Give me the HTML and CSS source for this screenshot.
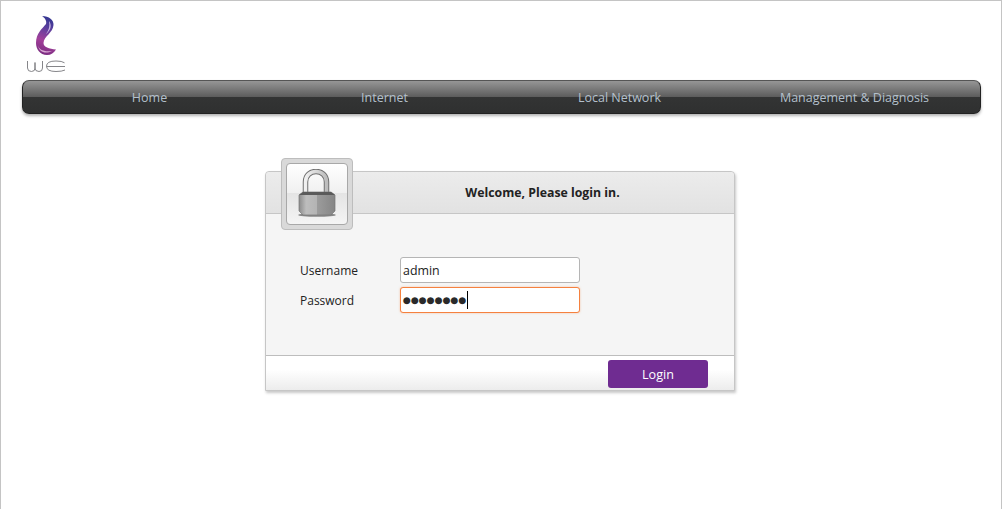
FILE: index.html
```html
<!DOCTYPE html>
<html lang="en">
<head>
<meta charset="utf-8">
<title>Login</title>
<link rel="stylesheet" href="styles.css">
</head>
<body>
<div class="page">
  <header class="logo-row">
    <svg class="logo" width="44" height="60" viewBox="0 0 44 60" aria-label="we logo">
      <defs>
        <linearGradient id="sw" x1="0.6" y1="0" x2="0.4" y2="1">
          <stop offset="0" stop-color="#2f3590"/>
          <stop offset="0.3" stop-color="#5b3f9e"/>
          <stop offset="0.65" stop-color="#a2409a"/>
          <stop offset="1" stop-color="#7a2c80"/>
        </linearGradient>
      </defs>
      <path d="M18 1 C25 1 30 5 29.500 10 C29 18 20 21 19.500 28 C19.500 32 25 34 32 34.500 C30 38 27 40 23 40 C16 40 12 34 12 28 C12 18 18 14 22 9 C23 6 21 3 18 1 Z" fill="url(#sw)"/>
      <path d="M25 6 C28 10 27 15 22 19 C25 15 26 11 25 6 Z" fill="#c9b8e2"/>
      <path d="M14 30 C15 35 20 37 28 36 C22 39 15 38 14 30 Z" fill="#d9a8d4"/>
      <path d="M3.500 46 V53 Q3.500 56.500 7.500 56.500 Q11 56.500 11 53 V47.500 V53 Q11 56.500 15 56.500 Q18.500 56.500 18.500 53 V46" fill="none" stroke="#77777c" stroke-width="0.9"/>
      <path d="M40.500 47.800 Q38 46 32 46 Q22.500 46 22.500 51.200 Q22.500 56.500 32 56.500 Q38 56.500 41 55 M22.500 51.500 H41" fill="none" stroke="#77777c" stroke-width="0.9"/>
    </svg>
  </header>
  <nav class="nav">
    <a class="nav-item">Home</a>
    <a class="nav-item">Internet</a>
    <a class="nav-item">Local Network</a>
    <a class="nav-item">Management &amp; Diagnosis</a>
  </nav>
  <main class="card">
    <div class="lock-box">
      <div class="lock-inner">
        <svg width="44" height="50" viewBox="0 0 44 50">
          <defs>
            <linearGradient id="body" x1="0" x2="1" y1="0" y2="0">
              <stop offset="0" stop-color="#8b8b8b"/>
              <stop offset="0.2" stop-color="#bdbdbd"/>
              <stop offset="0.49" stop-color="#b4b4b4"/>
              <stop offset="0.5" stop-color="#9c9c9c"/>
              <stop offset="1" stop-color="#858585"/>
            </linearGradient>
            <linearGradient id="shackle" x1="0" x2="1" y1="0" y2="0">
              <stop offset="0" stop-color="#f0f0f0"/>
              <stop offset="0.5" stop-color="#d8d8d8"/>
              <stop offset="1" stop-color="#bdbdbd"/>
            </linearGradient>
          </defs>
          <path d="M10.500 25 V13 C10.500 -1 31.500 -1 31.500 13 V25" fill="none" stroke="#707070" stroke-width="5.500"/>
          <path d="M10.500 25 V13 C10.500 -1 31.500 -1 31.500 13 V25" fill="none" stroke="url(#shackle)" stroke-width="3.500"/>
          <ellipse cx="22" cy="46" rx="19" ry="1.800" fill="#333" opacity="0.55"/>
          <path d="M8 23 H36 L40 26 V42 L36 46 H8 L4 42 V26 Z" fill="url(#body)" stroke="#777" stroke-width="0.700"/>
          <path d="M8 23 H36 L40 26 H4 Z" fill="#5a5a5a"/>
        </svg>
      </div>
    </div>
    <div class="card-head">Welcome, Please login in.</div>
    <form class="card-body">
      <label class="field">
        <span class="field-label">Username</span>
        <span class="input">admin</span>
      </label>
      <label class="field">
        <span class="field-label">Password</span>
        <span class="input input-focus"><span class="dots">●●●●●●●●</span><span class="caret"></span></span>
      </label>
    </form>
    <div class="card-foot">
      <button class="login" type="button">Login</button>
    </div>
  </main>
</div>
</body>
</html>
```
FILE: styles.css
```css
* { box-sizing: border-box; }
html, body { margin: 0; height: 100%; overflow: hidden; background: #fff; }
body { font-family: "Open Sans", "Noto Sans", sans-serif; font-size: 12px; color: #222; }

.page {
  width: 1002px;
  height: 509px;
  border: 1px solid #c4c4c4;
  border-bottom: 0;
  padding: 14px 20px 0 21px;
}

.logo-row { height: 65px; padding-left: 2px; display: flex; align-items: flex-start; }
.logo { display: block; }

.nav {
  height: 34px;
  display: grid;
  grid-template-columns: repeat(4, 235px);
  padding: 0 10px 0 9px;
  border: 1px solid #222;
  border-top-color: #555;
  border-radius: 7px;
  background: linear-gradient(#969696 0, #5c5c5c 50%, #333434 50%, #2f3030 100%);
  box-shadow: 0 2px 3px rgba(0, 0, 0, .3);
}
.nav-item {
  display: flex;
  align-items: center;
  justify-content: center;
  color: #b4c0cc;
  font-size: 12.500px;
}

.card {
  position: relative;
  width: 470px;
  height: 220px;
  margin: 57px 0 0 243px;
  background: #f5f5f5;
  border: 1px solid #c6c6c6;
  border-radius: 4px 4px 0 0;
  box-shadow: 1px 2px 3px rgba(0, 0, 0, .22);
  display: flex;
  flex-direction: column;
}

.lock-box {
  position: absolute;
  left: 15px;
  top: -14px;
  width: 72px;
  height: 72px;
  padding: 4px;
  background: #d9d9d9;
  border: 1px solid #bdbdbd;
  border-radius: 4px;
}
.lock-inner {
  height: 100%;
  border: 1px solid #a8a8a8;
  border-radius: 4px;
  background: linear-gradient(#ffffff 0, #f0f0f0 48%, #e4e4e4 48%, #f4f4f4 100%);
  display: flex;
  align-items: center;
  justify-content: center;
}

.card-head {
  height: 42px;
  flex: none;
  padding-left: 85px;
  display: flex;
  align-items: center;
  justify-content: center;
  font-weight: 700;
  font-size: 12.300px;
  color: #222;
  background: linear-gradient(#ececec, #e2e2e2);
  border-bottom: 1px solid #c6c6c6;
  border-radius: 4px 4px 0 0;
}

.card-body {
  flex: 1;
  padding: 43px 0 0 34px;
  display: flex;
  flex-direction: column;
  gap: 4px;
}
.field { display: flex; align-items: center; height: 26px; }
.field-label { width: 100px; color: #222; font-size: 12px; }
.input {
  width: 180px;
  height: 26px;
  padding: 0 2px;
  display: flex;
  align-items: center;
  background: #fff;
  border: 1px solid #b5b5b5;
  border-radius: 3px;
  font-size: 12.400px;
  color: #222;
}
.input-focus { border-color: #f5813f; box-shadow: 0 0 2px rgba(245, 129, 63, .5); }
.dots { font-family: "DejaVu Sans", sans-serif; font-size: 9.100px; color: #2a2a2a; }
.caret { width: 1px; height: 18px; background: #000; margin-left: 1px; }

.card-foot {
  height: 35px;
  flex: none;
  padding: 4px 26px 0 0;
  display: flex;
  justify-content: flex-end;
  align-items: flex-start;
  background: linear-gradient(#fff 40%, #ececec);
  border-top: 1px solid #bdbdbd;
}
.login {
  width: 100px;
  height: 28px;
  border: 0;
  border-radius: 3px;
  background: #6f2c91;
  color: #fff;
  font: 12.600px "Open Sans", "Noto Sans", sans-serif;
}
```
